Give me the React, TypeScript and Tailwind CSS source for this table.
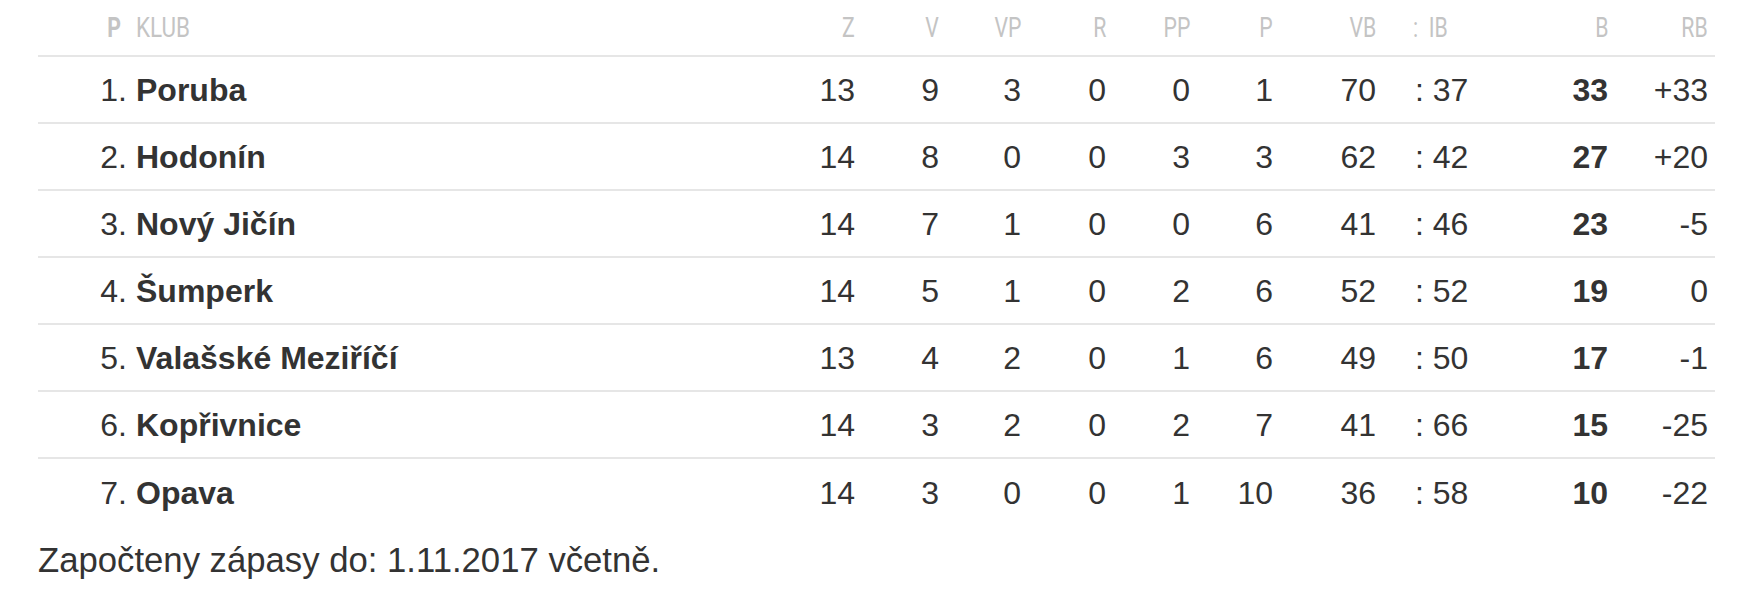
import React from "react";

type Row = {
  rank: number;
  club: string;
  z: number;
  v: number;
  vp: number;
  r: number;
  pp: number;
  p: number;
  vb: number;
  ib: number;
  b: number;
  rb: string;
};

const rows: Row[] = [
  { rank: 1, club: "Poruba", z: 13, v: 9, vp: 3, r: 0, pp: 0, p: 1, vb: 70, ib: 37, b: 33, rb: "+33" },
  { rank: 2, club: "Hodonín", z: 14, v: 8, vp: 0, r: 0, pp: 3, p: 3, vb: 62, ib: 42, b: 27, rb: "+20" },
  { rank: 3, club: "Nový Jičín", z: 14, v: 7, vp: 1, r: 0, pp: 0, p: 6, vb: 41, ib: 46, b: 23, rb: "-5" },
  { rank: 4, club: "Šumperk", z: 14, v: 5, vp: 1, r: 0, pp: 2, p: 6, vb: 52, ib: 52, b: 19, rb: "0" },
  { rank: 5, club: "Valašské Meziříčí", z: 13, v: 4, vp: 2, r: 0, pp: 1, p: 6, vb: 49, ib: 50, b: 17, rb: "-1" },
  { rank: 6, club: "Kopřivnice", z: 14, v: 3, vp: 2, r: 0, pp: 2, p: 7, vb: 41, ib: 66, b: 15, rb: "-25" },
  { rank: 7, club: "Opava", z: 14, v: 3, vp: 0, r: 0, pp: 1, p: 10, vb: 36, ib: 58, b: 10, rb: "-22" },
];

const grid =
  "grid grid-cols-[89px_668px_60px_84px_82px_85px_84px_83px_103px_184px_48px_100px] pr-[7px] items-center";

function HR({ children }: { children: React.ReactNode }) {
  return (
    <div className="text-right">
      <span className="inline-block scale-x-[0.76] origin-right font-normal">{children}</span>
    </div>
  );
}

export default function App() {
  return (
    <div className="bg-white w-[1740px] h-[600px] text-[#333333] font-['Liberation_Sans',Arial,sans-serif]">
      <div className="ml-[38px] w-[1677px]">
        <div className="grid grid-cols-[89px_668px_60px_84px_82px_85px_84px_83px_103px_184px_48px_100px] pr-[7px] items-center h-[57px] border-b-2 border-[#e6e6e6] text-[28px] leading-none text-[#c4c4c4] font-['Roboto',sans-serif]">
          <div className="text-right pr-[6px]">
            <span className="inline-block scale-x-[0.76] origin-right font-bold">P</span>
          </div>
          <div className="pl-[9px]">
            <span className="inline-block scale-x-[0.8] origin-left font-normal">KLUB</span>
          </div>
          <HR>Z</HR>
          <HR>V</HR>
          <HR>VP</HR>
          <HR>R</HR>
          <HR>PP</HR>
          <HR>P</HR>
          <HR>VB</HR>
          <div className="pl-[37px]">
            <span className="inline-block scale-x-[0.76] origin-left whitespace-pre">:  IB</span>
          </div>
          <HR>B</HR>
          <HR>RB</HR>
        </div>
        {rows.map((row, i) => (
          <div
            key={row.rank}
            className={`${grid} h-[67px] text-[32px] leading-none ${
              i < rows.length - 1 ? "border-b-2 border-[#e6e6e6]" : ""
            }`}
          >
            <div className="text-right">{row.rank}.</div>
            <div className="pl-[9px] font-bold whitespace-nowrap">{row.club}</div>
            <div className="text-right">{row.z}</div>
            <div className="text-right">{row.v}</div>
            <div className="text-right">{row.vp}</div>
            <div className="text-right">{row.r}</div>
            <div className="text-right">{row.pp}</div>
            <div className="text-right">{row.p}</div>
            <div className="text-right">{row.vb}</div>
            <div className="pl-[39px] whitespace-pre">: {row.ib}</div>
            <div className="text-right font-bold">{row.b}</div>
            <div className="text-right">{row.rb}</div>
          </div>
        ))}
        <p className="mt-[10px] text-[34.7px] leading-[48px]">Započteny zápasy do: 1.11.2017 včetně.</p>
      </div>
    </div>
  );
}
